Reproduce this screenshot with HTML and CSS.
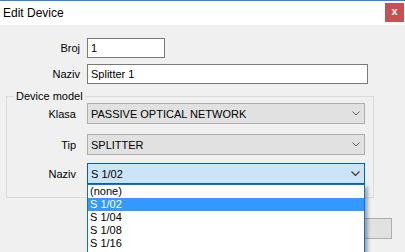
FILE: index.html
```html
<!DOCTYPE html>
<html lang="en">
<head>
    <meta charset="UTF-8">
    <title>Edit Device</title>
    <link rel="stylesheet" href="styles.css">
</head>
<body>
    <div class="window">
        <div class="titlebar">
            <span class="title">Edit Device</span>
            <span class="close">x</span>
        </div>
        <div class="content">
            <div class="row">
                <label class="lbl">Broj</label>
                <div class="input short">1</div>
            </div>
            <div class="row gap">
                <label class="lbl">Naziv</label>
                <div class="input long">Splitter 1</div>
            </div>
            <fieldset class="group">
                <legend>Device model</legend>
                <div class="row">
                    <label class="lbl inner">Klasa</label>
                    <div class="combo">
                        <span>PASSIVE OPTICAL NETWORK</span>
                        <svg class="chev" width="8" height="5" viewBox="0 0 8 5"><polyline points="0.5,0.5 4,4 7.5,0.5" fill="none" stroke="#606060" stroke-width="1"/></svg>
                    </div>
                </div>
                <div class="row tip">
                    <label class="lbl inner">Tip</label>
                    <div class="combo">
                        <span>SPLITTER</span>
                        <svg class="chev" width="8" height="5" viewBox="0 0 8 5"><polyline points="0.5,0.5 4,4 7.5,0.5" fill="none" stroke="#606060" stroke-width="1"/></svg>
                    </div>
                </div>
                <div class="row naziv">
                    <label class="lbl inner">Naziv</label>
                    <div class="combo focused">
                        <span>S 1/02</span>
                        <svg class="chev" width="9" height="5" viewBox="0 0 9 5"><polyline points="0.5,0.5 4.5,4.5 8.5,0.5" fill="none" stroke="#404040" stroke-width="1.3"/></svg>
                    </div>
                </div>
            </fieldset>
            <div class="buttons">
                <button class="btn">OK</button>
            </div>
        </div>
        <ul class="dropdown">
            <li>(none)</li>
            <li class="selected">S 1/02</li>
            <li>S 1/04</li>
            <li>S 1/08</li>
            <li>S 1/16</li>
        </ul>
    </div>
</body>
</html>
```

FILE: styles.css
```css
body {
    margin: 0;
    font-family: "Liberation Sans", Arial, sans-serif;
    font-size: 11px;
    color: #000;
}
.window {
    position: relative;
    width: 405px;
    height: 252px;
    background: #f0f0f0;
    overflow: hidden;
}
.titlebar {
    height: 24px;
    background: #fff;
    border-top: 1px solid #2b88d8;
    display: flex;
    justify-content: space-between;
    align-items: flex-start;
}
.title {
    font-size: 12px;
    margin: 5px 0 0 3px;
}
.close {
    width: 19px;
    height: 19px;
    margin: 2px 1px 0 0;
    background: #c75050;
    color: #fff;
    font-weight: bold;
    font-size: 11px;
    line-height: 17px;
    text-align: center;
}
.content {
    padding-top: 13px;
}
.row {
    display: flex;
    align-items: center;
}
.row.gap { margin-top: 6px; }
.lbl {
    width: 80px;
    margin-right: 7px;
    text-align: right;
}
.lbl.inner {
    width: 69px;
    margin-right: 11px;
}
.input {
    box-sizing: border-box;
    height: 20px;
    border: 1px solid #7a7a7a;
    background: #fff;
    padding: 2px 3px;
    line-height: 14px;
}
.short { width: 78px; }
.long { width: 281px; }
.group {
    margin: 6px 0 0 6px;
    width: 368px;
    box-sizing: border-box;
    padding: 0 0 13px 0;
    border: 1px solid #dcdcdc;
}
.group legend {
    margin-left: 7px;
    padding: 0 2px;
    line-height: 13px;
    font-size: 11px;
}
.combo {
    box-sizing: border-box;
    width: 278px;
    height: 21px;
    border: 1px solid #adadad;
    background: #e1e1e1;
    display: flex;
    align-items: center;
    justify-content: space-between;
    padding: 0 4px 0 3px;
}
.combo.focused {
    border-color: #0063b1;
    background: #cce4f7;
}
.tip { margin-top: 10px; }
.naziv { margin-top: 8px; }
.buttons {
    display: flex;
    justify-content: flex-end;
    margin: 20px 13px 0 0;
}
.btn {
    width: 75px;
    height: 21px;
    border: 1px solid #adadad;
    background: #e1e1e1;
    font-family: "Liberation Sans", Arial, sans-serif;
    font-size: 11px;
}
.dropdown {
    position: absolute;
    left: 87px;
    top: 184px;
    width: 278px;
    height: 80px;
    box-sizing: border-box;
    margin: 0;
    padding: 0;
    list-style: none;
    background: #fff;
    border: 1px solid #0078d7;
    box-shadow: 3px 3px 3px rgba(0, 0, 0, 0.3);
}
.dropdown li {
    height: 13px;
    line-height: 13px;
    padding-left: 2px;
}
.dropdown li.selected {
    background: #3399ff;
    color: #fff;
}
```
